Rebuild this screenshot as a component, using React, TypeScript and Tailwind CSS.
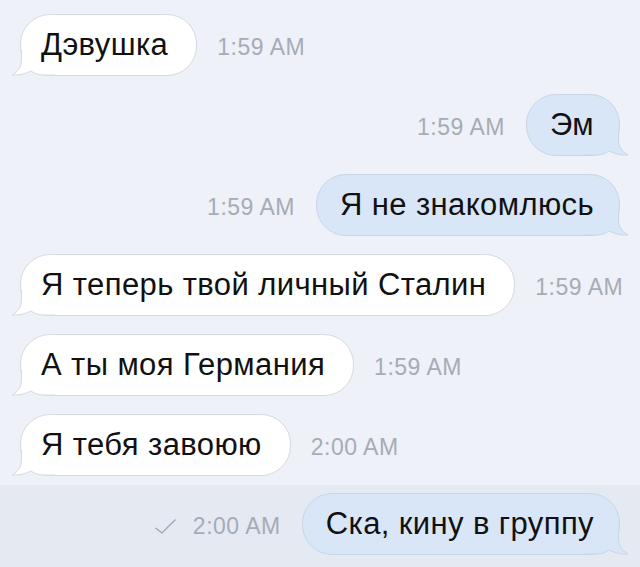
const font = { fontFamily: '"Liberation Sans", Arial, sans-serif' };

function Tail({ out }: { out?: boolean }) {
  const fill = out ? "#d9e6f7" : "#ffffff";
  const stroke = out ? "#c9d6e8" : "#d6dae1";
  return (
    <svg
      width="44"
      height="26"
      viewBox="0 0 44 26"
      className={
        out
          ? "absolute right-[-10px] bottom-[-1px] -scale-x-100"
          : "absolute left-[-10px] bottom-[-1px]"
      }
    >
      <path
        d="M10.5 0 L10.5 10 C10.5 17 7 21.5 1 25 C7 25.5 14 24 20 21 C24 24 28 25 33 25 L44 25 L44 0 Z"
        fill={fill}
      />
      <path
        d="M10.5 0 L10.5 10 C10.5 17 7 21.5 1 25 C7 25.5 14 24 20 21 C24 24 28 25 33 25 L44 25"
        fill="none"
        stroke={stroke}
        strokeWidth="1"
      />
    </svg>
  );
}

function Bubble({ text, out }: { text: string; out?: boolean }) {
  return (
    <div
      className={
        out
          ? "relative flex h-[62px] items-center rounded-[30px] border border-[#c9d6e8] bg-[#d9e6f7] pl-[23px] pr-[25px] text-[31px] tracking-[0.4px] text-[#111]"
          : "relative flex h-[62px] items-center rounded-[30px] border border-[#d6dae1] bg-white pl-[20px] pr-[28px] text-[31px] tracking-[0.4px] text-[#111]"
      }
    >
      <Tail out={out} />
      <span className="relative">{text}</span>
    </div>
  );
}

function Time({ t, check }: { t: string; check?: boolean }) {
  return (
    <div className="flex items-center gap-[17px] pt-[5px] text-[23px] tracking-[0.5px] text-[#a6acb6]">
      {check && (
        <svg width="21" height="15" viewBox="0 0 21 15">
          <path d="M0.5 9 L7 14 L20.5 0.5" fill="none" stroke="#9ea4ae" strokeWidth="1.3" />
        </svg>
      )}
      <span>{t}</span>
    </div>
  );
}

function In({ text, t }: { text: string; t: string }) {
  return (
    <div className="flex h-[62px] items-center gap-[20px] pl-[20px]">
      <Bubble text={text} />
      <Time t={t} />
    </div>
  );
}

function Out({ text, t, check }: { text: string; t: string; check?: boolean }) {
  return (
    <div className="flex h-[62px] items-center justify-end gap-[21px] pr-[20px]">
      <Time t={t} check={check} />
      <Bubble text={text} out />
    </div>
  );
}

export default function App() {
  return (
    <div className="flex h-[567px] w-[640px] flex-col overflow-hidden bg-[#eef1f7]" style={font}>
      <div className="flex flex-col gap-[18px] pt-[14px]">
        <In text="Дэвушка" t="1:59 AM" />
        <Out text="Эм" t="1:59 AM" />
        <Out text="Я не знакомлюсь" t="1:59 AM" />
        <In text="Я теперь твой личный Сталин" t="1:59 AM" />
        <In text="А ты моя Германия" t="1:59 AM" />
        <In text="Я тебя завоюю" t="2:00 AM" />
      </div>
      <div className="mt-[9px] flex-1 bg-[#e4e9f2] pt-[8px]">
        <Out text="Ска, кину в группу" t="2:00 AM" check />
      </div>
    </div>
  );
}
